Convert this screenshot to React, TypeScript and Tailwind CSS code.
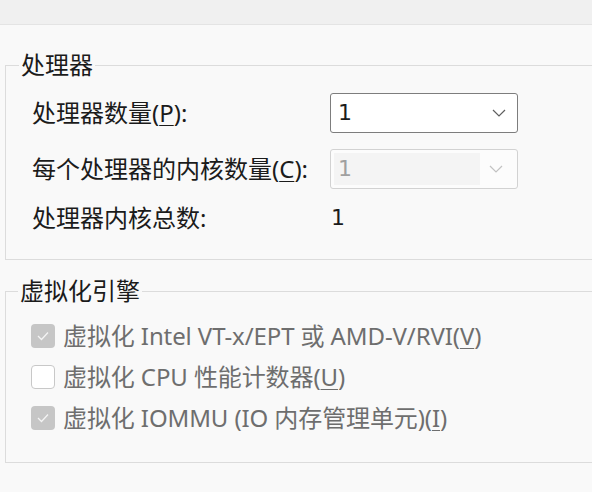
import React from 'react';

const Mn = ({ c }: { c: string }) => <span className="underline underline-offset-[3px] decoration-1">{c}</span>;

const Chevron = ({ color }: { color: string }) => (
  <svg width="14" height="8" viewBox="0 0 14 8" fill="none" className="mr-[11px]">
    <path d="M1 1l6 6 6-6" stroke={color} strokeWidth="1.2" />
  </svg>
);

const CheckBox = ({ checked }: { checked: boolean }) =>
  checked ? (
    <span className="flex h-[24px] w-[24px] items-center justify-center rounded-[4px] bg-[#c6c6c6]">
      <svg width="12" height="10" viewBox="0 0 12 10" fill="none">
        <path d="M1 5l3.5 3.5L11 1.5" stroke="#f4f4f4" strokeWidth="1.3" />
      </svg>
    </span>
  ) : (
    <span className="h-[24px] w-[24px] rounded-[4px] border border-[#c8c8c8] bg-white" />
  );

const App = () => {
  const engines = [
    { on: true, text: <>虚拟化 Intel VT-x/EPT 或 AMD-V/RVI(<Mn c="V" />)</> },
    { on: false, text: <>虚拟化 CPU 性能计数器(<Mn c="U" />)</> },
    { on: true, text: <>虚拟化 IOMMU (IO 内存管理单元)(<Mn c="I" />)</> },
  ];

  return (
    <div
      className="h-[492px] w-[592px] overflow-hidden bg-[#f9f9f9] text-[24px] text-[#1b1b1b]"
      style={{ fontFamily: '"Noto Sans", "Noto Sans CJK SC", sans-serif' }}
    >
      <div className="h-[25px] border-b border-[#e4e4e4] bg-[#f0f0f0]" />

      <fieldset className="ml-[5px] mt-[24px] w-[640px] border border-[#dcdcdc] pb-[28px] pl-[26px]">
        <legend className="-ml-[13px] px-[2px] leading-[32px]">处理器</legend>
        <div className="mt-[12px] grid grid-cols-[298px_188px] items-center gap-y-[16px] leading-[26px]">
          <span>处理器数量(<Mn c="P" />):</span>
          <div className="flex h-[40px] items-center justify-between rounded-[3px] border border-[#7d7d7d] bg-white">
            <span className="pl-[7px] text-[22px]" style={{ fontFamily: '"DejaVu Sans", sans-serif' }}>1</span>
            <Chevron color="#5f5f5f" />
          </div>

          <span>每个处理器的内核数量(<Mn c="C" />):</span>
          <div className="flex h-[40px] items-center justify-between rounded-[3px] border border-[#d2d2d2] bg-[#fcfcfc] p-[3px]">
            <span
              className="flex h-full w-[146px] items-center bg-[#f4f4f4] pl-[4px] text-[22px] text-[#a0a0a0]"
              style={{ fontFamily: '"DejaVu Sans", sans-serif' }}
            >
              1
            </span>
            <Chevron color="#c2c2c2" />
          </div>

          <span>处理器内核总数:</span>
          <span className="pl-[1px] text-[22px]" style={{ fontFamily: '"DejaVu Sans", sans-serif' }}>1</span>
        </div>
      </fieldset>

      <fieldset className="ml-[5px] mt-[15px] w-[640px] border border-[#dcdcdc] pb-[24px] pl-[25px]">
        <legend className="-ml-[13px] px-[2px] leading-[32px]">虚拟化引擎</legend>
        <div className="mt-[8px] flex flex-col">
          {engines.map((e, i) => (
            <div key={i} className="flex h-[41px] items-center gap-[8px] text-[#6e6e6e]">
              <CheckBox checked={e.on} />
              <span className="tracking-[-0.1px]">{e.text}</span>
            </div>
          ))}
        </div>
      </fieldset>
    </div>
  );
};

export default App;
